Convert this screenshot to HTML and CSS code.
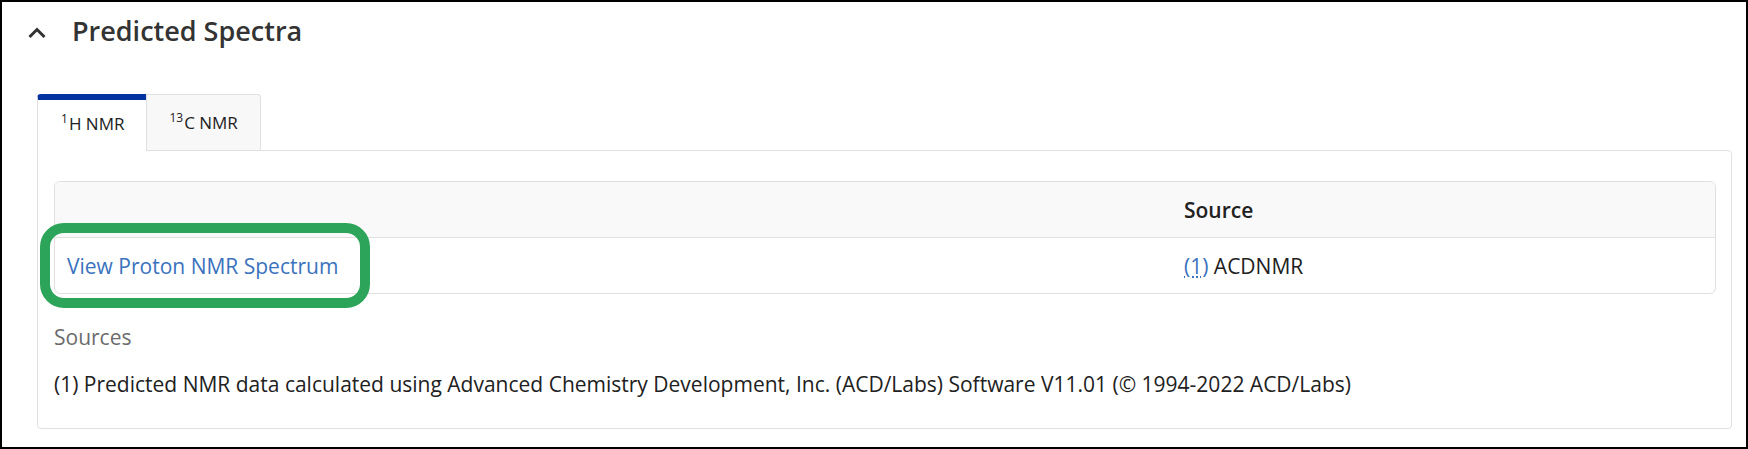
FILE: index.html
```html
<!DOCTYPE html>
<html lang="en">
<head>
<meta charset="utf-8">
<title>Predicted Spectra</title>
<link rel="stylesheet" href="styles.css">
</head>
<body>
<div class="frame">
  <div class="section-head">
    <svg class="chevron" width="20" height="14" viewBox="0 0 20 14" aria-hidden="true">
      <polyline points="2.5,11 10,3.5 17.5,11" fill="none" stroke="#333" stroke-width="3" stroke-linecap="butt" stroke-linejoin="miter"/>
    </svg>
    <h2 class="section-title">Predicted Spectra</h2>
  </div>

  <div class="tabs-wrap">
    <div class="tabs">
      <div class="tab active"><sup>1</sup>H NMR</div>
      <div class="tab"><sup>13</sup>C NMR</div>
    </div>
    <div class="panel">
      <table class="data">
        <colgroup>
          <col class="col-main">
          <col>
        </colgroup>
        <thead>
          <tr><th></th><th>Source</th></tr>
        </thead>
        <tbody>
          <tr>
            <td class="cell-link">
              <a class="link" href="#">View Proton NMR Spectrum</a>
              <span class="highlight" aria-hidden="true"></span>
            </td>
            <td><a class="ref" href="#">(1)</a> ACDNMR</td>
          </tr>
        </tbody>
      </table>
      <p class="sources-label">Sources</p>
      <p class="footnote">(1) Predicted NMR data calculated using Advanced Chemistry Development, Inc. (ACD/Labs) Software V11.01 (© 1994-2022 ACD/Labs)</p>
    </div>
  </div>
</div>
</body>
</html>
```

FILE: styles.css
```css
html, body {
  margin: 0;
  padding: 0;
  background: #fff;
}

body {
  font-family: "Open Sans", "Noto Sans", sans-serif;
  color: #212121;
}

.frame {
  box-sizing: border-box;
  width: 1748px;
  height: 449px;
  border: 2px solid #000;
  background: #fff;
  overflow: hidden;
}

.section-head {
  display: flex;
  align-items: center;
  margin-top: 10px;
  height: 37px;
}

.chevron {
  display: block;
  margin-left: 25px;
  margin-top: 4px;
}

.section-title {
  margin: 0 0 0 25px;
  font-size: 27px;
  line-height: 37px;
  font-weight: 600;
  color: #333;
}

.tabs-wrap {
  margin: 45px 14px 0 35px;
}

.tabs {
  display: flex;
  align-items: flex-start;
  height: 56px;
}

.tab {
  box-sizing: border-box;
  height: 56px;
  padding: 16px 22px 0 22px;
  font-size: 17px;
  line-height: 23px;
  color: #212121;
  background: #f8f8f8;
  border: 1px solid #e0e0e0;
  border-bottom: 0;
  border-top-right-radius: 4px;
  white-space: nowrap;
}

.tab.active {
  position: relative;
  z-index: 1;
  height: 57px;
  padding: 12px 22px 0 23px;
  background: #fff;
  border-top: 6px solid #0033a0;
  border-right: 0;
  border-top-left-radius: 4px;
  border-top-right-radius: 0;
}

.tab sup {
  font-size: 12px;
  line-height: 0;
  vertical-align: 7px;
  margin-right: 1px;
}

.panel {
  border: 1px solid #e0e0e0;
  border-radius: 0 4px 4px 4px;
  padding: 30px 15px 29px 16px;
}

.data {
  width: 100%;
  border-collapse: separate;
  border-spacing: 0;
  border: 1px solid #e0e0e0;
  border-radius: 6px;
  font-size: 21px;
  table-layout: fixed;
}

.col-main {
  width: 1117px;
}

.data th {
  height: 55px;
  padding: 0 12px;
  text-align: left;
  font-weight: 600;
  background: #f9f9f9;
  border-bottom: 1px solid #e0e0e0;
  color: #212121;
}

.data th:first-child {
  border-top-left-radius: 5px;
}

.data th:last-child {
  border-top-right-radius: 5px;
}

.data td {
  height: 55px;
  padding: 0 12px;
  color: #212121;
}

.cell-link {
  position: relative;
}

.link {
  color: #3a72bd;
  text-decoration: none;
}

.ref {
  color: #3a72bd;
  text-decoration: underline dotted;
  text-underline-offset: 3px;
}

.highlight {
  position: absolute;
  left: -15px;
  top: -15px;
  width: 330px;
  height: 85px;
  box-sizing: border-box;
  border: 10px solid #2ca55a;
  border-radius: 24px;
  pointer-events: none;
}

.sources-label {
  margin: 28px 0 0;
  font-size: 21px;
  line-height: 30px;
  color: #6b6b6b;
}

.footnote {
  margin: 17px 0 0;
  font-size: 21px;
  line-height: 30px;
  color: #212121;
}
```
